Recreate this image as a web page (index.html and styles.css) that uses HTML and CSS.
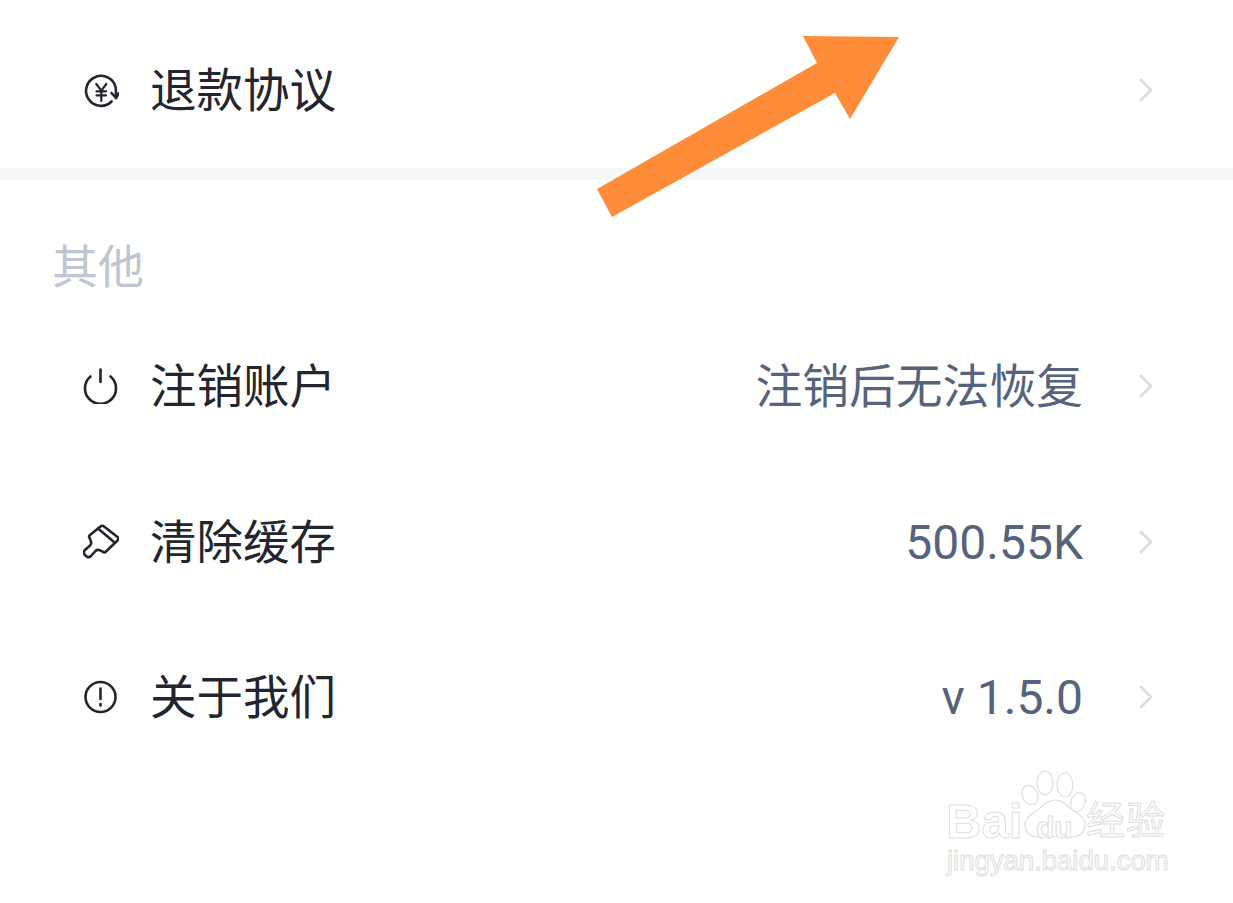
FILE: index.html
```html
<!DOCTYPE html>
<html lang="zh-CN">
<head>
<meta charset="utf-8">
<title>设置</title>
<link rel="stylesheet" href="styles.css">
</head>
<body>
<main class="page">
  <section class="group">
    <div class="row">
      <svg class="icon" viewBox="0 0 36 36"><path class="ic" d="M28.600 29.500A15 15 0 1 1 32.800 16L33 26"/><path class="ic" d="M28.500 21L33 26l3-5"/><path class="ic thin" d="M13.300 12l5 6.700 5-6.700M18.300 18.700V29M13.500 19.300h9.600M13.500 23.300h9.600"/></svg>
      <span class="label">退款协议</span>
      <svg class="chev" viewBox="0 0 14 24"><path d="M2 2l10 10L2 22"/></svg>
    </div>
  </section>
  <div class="divider"></div>
  <h2 class="title">其他</h2>
  <section class="group">
    <div class="row">
      <svg class="icon" viewBox="0 0 36 36"><path class="ic" d="M7.500 8.500a15.500 15.500 0 1 0 20 0M17.500 1.500V14"/></svg>
      <span class="label">注销账户</span>
      <span class="value">注销后无法恢复</span>
      <svg class="chev" viewBox="0 0 14 24"><path d="M2 2l10 10L2 22"/></svg>
    </div>
    <div class="row">
      <svg class="icon" viewBox="0 0 36 36"><path class="ic" d="M17.500 2.500c1-1 2.500-1 3.500 0l13.500 10.500c1 1 1 2.500 0 3.500L23 27.500c-1 1-2.500 1-3.500 0-1-.5-2-1-3.500-1.500-1.500-.3-2.500 0-3.500 1l-4.500 5c-1.500 1.500-3.500 1.500-5 0l-1-1c-1.500-1.500-1.500-3.500 0-5l5-4.500c1-1 1.500-2 1-3.500-.2-1.500-.8-3-1.500-4-.7-1-.5-2 .5-3z"/><path class="ic" d="M15 4.500l16 13.500"/></svg>
      <span class="label">清除缓存</span>
      <span class="value num">500.55K</span>
      <svg class="chev" viewBox="0 0 14 24"><path d="M2 2l10 10L2 22"/></svg>
    </div>
    <div class="row">
      <svg class="icon" viewBox="0 0 36 36"><circle class="ic" cx="17.500" cy="18" r="15"/><path class="ic" d="M17.500 9.500V20M17.500 25v1.500"/></svg>
      <span class="label">关于我们</span>
      <span class="value num">v 1.5.0</span>
      <svg class="chev" viewBox="0 0 14 24"><path d="M2 2l10 10L2 22"/></svg>
    </div>
  </section>
</main>

<svg class="arrow" viewBox="0 0 1233 903"><polygon points="899,37 803,36 817,63 597,189 612,217 835,93 850,119"/></svg>

<div class="mark">
  <svg class="paw" viewBox="0 0 70 72">
    <ellipse cx="25" cy="13" rx="8" ry="12"/><ellipse cx="45" cy="15" rx="8" ry="12"/><ellipse cx="10" cy="25" rx="7.500" ry="10" transform="rotate(-25 10 25)"/><ellipse cx="58" cy="32" rx="7" ry="10" transform="rotate(20 58 32)"/>
    <path d="M35 30c-9 0-12 7-19 11-9 5-12 10-11 16 2 9 10 11 18 10 8-1 16-1 24 0 8 1 16-1 18-10 1-6-2-11-11-16-7-4-10-11-19-11z"/>
  </svg>
  <div class="mark-top"><span class="bai">Bai</span><span class="du">du</span><span class="jy">经验</span></div>
  <div class="mark-url">jingyan.baidu.com</div>
</div>
</body>
</html>
```
FILE: styles.css
```css
* { box-sizing: border-box; }
html, body { margin: 0; padding: 0; }
body {
  width: 1233px;
  height: 903px;
  overflow: hidden;
  background: #fff;
  position: relative;
  font-family: Roboto, "Noto Sans CJK SC", sans-serif;
}
.page { padding-top: 12px; }
.row {
  height: 155.500px;
  display: flex;
  align-items: center;
  padding: 0 80px 0 83px;
}
.icon { width: 36px; height: 36px; flex: none; margin-right: 31px; }
.ic { fill: none; stroke: #23262f; stroke-width: 2.600; stroke-linecap: round; stroke-linejoin: round; }
.ic.thin { stroke-width: 2.200; }
.label { font-size: 46.500px; color: #23262f; flex: none; line-height: 1; position: relative; top: 1px; }
.value { margin-left: auto; font-size: 46.800px; color: #56637d; line-height: 1; position: relative; top: 1px; }
.value.num { font-size: 48px; }
.chev { width: 14px; height: 24px; flex: none; margin-left: 56px; }
.row .label + .chev { margin-left: auto; }
.chev path { fill: none; stroke: #d9dce2; stroke-width: 2.500; stroke-linecap: round; stroke-linejoin: round; }
.divider { height: 12px; background: #f6f7fb; }
.title {
  margin: 0;
  height: 129px;
  padding: 64px 0 0 52px;
  font-size: 46px;
  font-weight: 400;
  line-height: 46px;
  color: #c0c5d2;
}
.arrow { position: absolute; left: 0; top: 0; width: 1233px; height: 903px; pointer-events: none; }
.arrow polygon { fill: #ff8c38; }
.mark {
  position: absolute;
  left: 946px;
  top: 770px;
  width: 224px;
  height: 110px;
  font-family: "Liberation Sans", "Noto Sans CJK SC", sans-serif;
  color: #fff;
}
.mark-top, .mark-url { -webkit-text-stroke: 1px #dedede; position: absolute; white-space: nowrap; }
.mark-top { left: 0; top: 26px; height: 50px; display: flex; align-items: center; z-index: 1; }
.bai { font-size: 49px; line-height: 50px; font-weight: 700; width: 86px; }
.du { font-size: 30px; font-weight: 700; width: 54px; padding-left: 4px; position: relative; top: 7px; }
.jy { font-size: 39px; line-height: 50px; letter-spacing: 1px; }
.mark-url { left: 1px; top: 78px; font-size: 27.500px; line-height: 26px; }
.paw { position: absolute; left: 74px; top: 0; width: 70px; height: 72px; }
.paw ellipse, .paw path { fill: #fff; stroke: #dedede; stroke-width: 1.200; }
```
